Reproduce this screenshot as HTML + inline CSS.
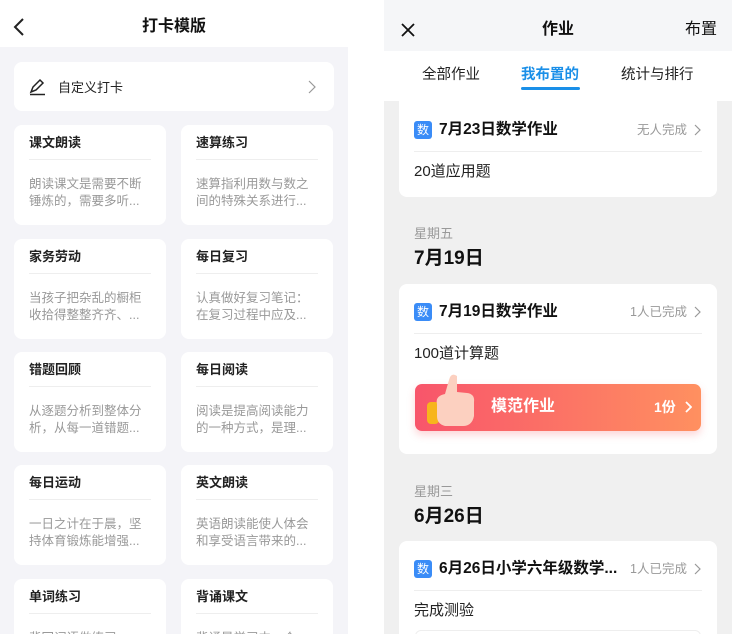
<!DOCTYPE html><html><head><meta charset="utf-8"><style>
*{margin:0;padding:0;box-sizing:border-box;line-height:1}
html,body{width:732px;height:634px;overflow:hidden}
body{background:#fff;font-family:"Liberation Sans","Noto Sans CJK SC",sans-serif;position:relative}
.a{position:absolute}
.lp{left:0;top:0;width:348px;height:634px;background:#f4f4f8;overflow:hidden}
.lh{left:0;top:0;width:348px;height:47px;background:#fff}
.card{position:absolute;background:#fff;border-radius:8px;overflow:hidden}
.g{width:152px;height:100px}
.g .t{position:absolute;left:15px;top:11px;font-size:13px;font-weight:bold;color:#222}
.g .d{position:absolute;left:15px;right:15px;top:34px;border-top:1px solid #eee}
.g .x{position:absolute;left:15px;top:51px;font-size:12.5px;color:#999;line-height:17px;width:118px}
.rp{left:384px;top:0;width:348px;height:634px;background:#f0f0f0;overflow:hidden}
.rc{position:absolute;left:15px;width:318px;background:#fff;border-radius:8px;overflow:hidden}
.badge{position:absolute;left:15px;width:18px;height:18px;background:#3a8cf7;border-radius:3px;color:#fff;font-size:12px;text-align:center;line-height:18px}
.ti{position:absolute;left:40px;font-size:15.5px;font-weight:bold;color:#111}
.st{position:absolute;right:30px;font-size:12.5px;color:#999}
.cv{position:absolute;left:295px}
.hr{position:absolute;left:15px;right:15px;border-top:1px solid #eee}
.bd{position:absolute;left:15px;font-size:15px;color:#222}
</style></head><body>
<div class="a lp">
<div class="a lh"></div>
<svg class="a" style="left:12px;top:17px" width="14" height="20"><path d="M11 2 L3 10 L11 18" fill="none" stroke="#222" stroke-width="2"/></svg>
<div class="a" style="left:0;width:348px;top:19px;text-align:center;font-size:16px;font-weight:bold;color:#111">打卡模版</div>
<div class="card" style="left:14px;top:62px;width:320px;height:49px">
<svg class="a" style="left:15px;top:16px" width="18" height="18"><path d="M2 14 L4 9 L11 2 L14 5 L7 12 Z M1 16.5 H16" fill="none" stroke="#222" stroke-width="1.5"/></svg>
<div class="a" style="left:44px;top:18.5px;font-size:13px;color:#222">自定义打卡</div>
<svg class="a" style="left:294px;top:18px" width="8" height="14"><path d="M1 1 L7 7 L1 13" fill="none" stroke="#999" stroke-width="1.2"/></svg>
</div>
<div class="card g" style="left:14px;top:125px"><div class="t">课文朗读</div><div class="d"></div><div class="x">朗读课文是需要不断锤炼的，需要多听...</div></div>
<div class="card g" style="left:181px;top:125px"><div class="t">速算练习</div><div class="d"></div><div class="x">速算指利用数与数之间的特殊关系进行...</div></div>
<div class="card g" style="left:14px;top:239px"><div class="t">家务劳动</div><div class="d"></div><div class="x">当孩子把杂乱的橱柜收拾得整整齐齐、...</div></div>
<div class="card g" style="left:181px;top:239px"><div class="t">每日复习</div><div class="d"></div><div class="x">认真做好复习笔记：在复习过程中应及...</div></div>
<div class="card g" style="left:14px;top:352px"><div class="t">错题回顾</div><div class="d"></div><div class="x">从逐题分析到整体分析，从每一道错题...</div></div>
<div class="card g" style="left:181px;top:352px"><div class="t">每日阅读</div><div class="d"></div><div class="x">阅读是提高阅读能力的一种方式，是理...</div></div>
<div class="card g" style="left:14px;top:465px"><div class="t">每日运动</div><div class="d"></div><div class="x">一日之计在于晨，坚持体育锻炼能增强...</div></div>
<div class="card g" style="left:181px;top:465px"><div class="t">英文朗读</div><div class="d"></div><div class="x">英语朗读能使人体会和享受语言带来的...</div></div>
<div class="card g" style="left:14px;top:579px"><div class="t">单词练习</div><div class="d"></div><div class="x">背回词语做练习，可...</div></div>
<div class="card g" style="left:181px;top:579px"><div class="t">背诵课文</div><div class="d"></div><div class="x">背诵是学习中一个基...</div></div>
</div>

<div class="a rp">
<div class="a" style="left:0;top:0;width:348px;height:51px;background:#f5f6f8"></div>
<svg class="a" style="left:17px;top:23px" width="14" height="14"><path d="M1 1 L13 13 M13 1 L1 13" stroke="#111" stroke-width="1.8"/></svg>
<div class="a" style="left:0;width:348px;top:22px;text-align:center;font-size:16px;font-weight:bold;color:#111">作业</div>
<div class="a" style="right:15px;top:22px;font-size:16px;color:#111">布置</div>
<div class="a" style="left:0;top:51px;width:348px;height:50px;background:#fff"></div>
<div class="a" style="left:38px;top:68px;font-size:14.5px;color:#222">全部作业</div>
<div class="a" style="left:137px;top:68px;font-size:14.5px;color:#1a8fe8;font-weight:bold">我布置的</div>
<div class="a" style="left:137px;top:87px;width:59px;height:3px;background:#1a8fe8;border-radius:2px"></div>
<div class="a" style="left:237px;top:68px;font-size:14.5px;color:#222">统计与排行</div>

<div class="rc" style="top:101px;height:96px;border-radius:0 0 8px 8px">
<div class="badge" style="top:20px">数</div><div class="ti" style="top:21px">7月23日数学作业</div>
<div class="st" style="top:23px">无人完成</div>
<svg class="a cv" style="top:23px" width="7" height="12"><path d="M1 1 L6 6 L1 11" fill="none" stroke="#999" stroke-width="1.2"/></svg>
<div class="hr" style="top:50px"></div><div class="bd" style="top:62.5px">20道应用题</div></div>

<div class="a" style="left:30px;top:226.5px;font-size:13px;color:#999">星期五</div>
<div class="a" style="left:30px;top:248.5px;font-size:19px;font-weight:bold;color:#111">7月19日</div>

<div class="rc" style="top:284px;height:170px">
<div class="badge" style="top:19px">数</div><div class="ti" style="top:20px">7月19日数学作业</div>
<div class="st" style="top:22px">1人已完成</div>
<svg class="a cv" style="top:22px" width="7" height="12"><path d="M1 1 L6 6 L1 11" fill="none" stroke="#999" stroke-width="1.2"/></svg>
<div class="hr" style="top:49px"></div><div class="bd" style="top:61.5px">100道计算题</div>
<div class="a" style="left:16px;top:100px;width:286px;height:47px;border-radius:7px;background:linear-gradient(90deg,#f8556b,#ff9060);box-shadow:0 4px 8px rgba(248,90,100,.25)"></div>
<svg class="a" style="left:26px;top:88px" width="66" height="58"><rect x="2" y="30" width="12" height="22" rx="4" fill="#f7b51c"/><path d="M12 32 Q10 24 20 22 L24 8 Q26 0 32 4 L32 20 L42 21 Q50 22 49 30 L49 44 Q47 54 38 54 L20 54 Q12 52 12 44 Z" fill="#fcd0c0"/></svg>
<div class="a" style="left:92px;top:115px;font-size:16px;color:#fff;font-weight:bold">模范作业</div>
<div class="a" style="left:255px;top:116px;font-size:14px;color:#fff;font-weight:bold">1份</div>
<svg class="a" style="left:286px;top:117px" width="7" height="12"><path d="M1 1 L6 6 L1 11" fill="none" stroke="#fff" stroke-width="1.8"/></svg>
</div>

<div class="a" style="left:30px;top:484.5px;font-size:13px;color:#999">星期三</div>
<div class="a" style="left:30px;top:506.5px;font-size:19px;font-weight:bold;color:#111">6月26日</div>

<div class="rc" style="top:541px;height:100px">
<div class="badge" style="top:19px">数</div><div class="ti" style="top:20px">6月26日小学六年级数学...</div>
<div class="st" style="top:22px">1人已完成</div>
<svg class="a cv" style="top:22px" width="7" height="12"><path d="M1 1 L6 6 L1 11" fill="none" stroke="#999" stroke-width="1.2"/></svg>
<div class="hr" style="top:49px"></div><div class="bd" style="top:61.5px">完成测验</div>
<div class="a" style="left:16px;top:89px;width:286px;height:20px;border:1px solid #eee;border-radius:6px"></div>
</div>
</div>
</body></html>
